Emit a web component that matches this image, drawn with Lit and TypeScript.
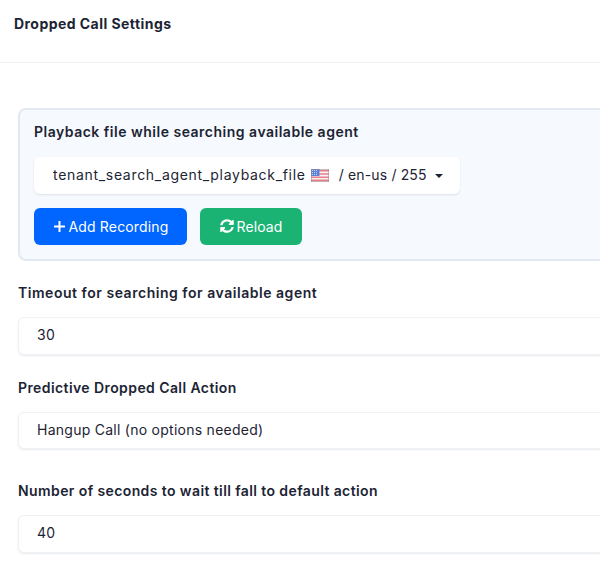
import { LitElement, html, css } from "lit";
import { customElement } from "lit/decorators.js";

@customElement("app-root")
export class AppRoot extends LitElement {
  static styles = css`
    :host {
      display: block;
      width: 600px;
      height: 576px;
      overflow: hidden;
      background: #fff;
      font-family: Inter, "Open Sans", sans-serif;
      color: #1c2434;
      font-size: 14px;
    }
    .head {
      height: 63px;
      box-sizing: border-box;
      padding: 14px 14px 0;
      border-bottom: 1px solid #eef2f6;
      font-weight: 700;
      font-size: 14px;
      line-height: 20px;
      letter-spacing: 0.45px;
      color: #1c2434;
    }
    .body {
      width: 640px;
      box-sizing: border-box;
      padding: 45px 0 0 18px;
      display: flex;
      flex-direction: column;
    }
    .panel {
      box-sizing: border-box;
      width: 620px;
      height: 153px;
      padding: 12px 14px 0;
      background: #f6f9fd;
      border: 2px solid #e2e9f2;
      border-radius: 8px;
    }
    .label {
      font-weight: 600;
      font-size: 14px;
      line-height: 20px;
      letter-spacing: 0.5px;
      color: #1c2434;
    }
    .label.timeout { letter-spacing: 0.53px; }
    .label.action { letter-spacing: 0.41px; }
    .label.seconds { letter-spacing: 0.4px; }
    .select {
      margin-top: 15px;
      display: inline-flex;
      align-items: center;
      height: 37px;
      width: 426px;
      box-sizing: border-box;
      padding: 0 0 3px 19px;
      background: #fff;
      border-radius: 6px;
      box-shadow: 0 1px 2px rgba(40, 60, 90, 0.12);
      white-space: nowrap;
    }
    .file { letter-spacing: 0.69px; }
    .loc { letter-spacing: 0.15px; }
    .flag { margin: 3px 6px 0 5px; flex: none; }
    .caret {
      margin: 3px 0 0 8px;
      width: 0;
      height: 0;
      border-left: 4px solid transparent;
      border-right: 4px solid transparent;
      border-top: 4px solid #1c2434;
    }
    .buttons { display: flex; gap: 13px; margin-top: 14px; }
    .btn {
      display: flex;
      align-items: center;
      justify-content: center;
      gap: 3px;
      height: 37px;
      box-sizing: border-box;
      padding-bottom: 1px;
      border-radius: 6px;
      color: #fff;
      font-size: 14px;
    }
    .add { width: 153px; background: #0066ff; letter-spacing: 0.15px; }
    .reload { width: 102px; background: #1ab374; letter-spacing: 0.1px; }
    .field { display: flex; flex-direction: column; }
    .input {
      box-sizing: border-box;
      width: 620px;
      height: 38px;
      display: flex;
      align-items: center;
      padding: 0 0 3px 18px;
      background: #fff;
      border: 1px solid #eef2f7;
      border-radius: 6px;
      box-shadow: 0 1px 2px rgba(40, 60, 90, 0.1);
      letter-spacing: 0.26px;
    }
    .short { height: 37px; }
    .f1 { margin-top: 22px; }
    .f2 { margin-top: 23px; }
    .f3 { margin-top: 32px; }
    .field .label { margin-bottom: 14px; }
  `;

  render() {
    return html`
      <div class="head">Dropped Call Settings</div>
      <div class="body">
        <div class="panel">
          <div class="label">Playback file while searching available agent</div>
          <div class="select">
            <span class="file">tenant_search_agent_playback_file</span>
            <svg class="flag" width="18" height="13" viewBox="0 0 18 13">
              <rect width="18" height="13" fill="#f7f1f2" />
              <path d="M0 1h18v1.6H0zM0 4.2h18v1.6H0zM0 7.4h18V9H0zM0 10.6h18v1.6H0z" fill="#e8808a" />
              <rect width="8.5" height="7" fill="#5a80d8" />
              <path d="M1 1.500h6M1 3.500h6M1 5.500h6" stroke="#dfe6f7" stroke-width=".8" stroke-dasharray="1 1" />
              <rect x=".25" y=".25" width="17.5" height="12.500" fill="none" stroke="#9a8a88" stroke-width=".5" />
            </svg>
            <span class="loc">&nbsp;/ en-us / 255</span>
            <span class="caret"></span>
          </div>
          <div class="buttons">
            <div class="btn add">
              <svg width="13" height="13" viewBox="0 0 13 13">
                <path d="M6.500 1v11M1 6.500h11" stroke="#fff" stroke-width="2" />
              </svg>
              <span>Add Recording</span>
            </div>
            <div class="btn reload">
              <svg width="14" height="14" viewBox="0 0 512 512" fill="#fff">
                <path d="M370.7 133.3C339.5 104 298.9 88 255.800 88c-77.500.1-144.300 53.200-162.800 126.900-1.300 5.400-6.100 9.100-11.600 9.100H24.100c-7.500 0-13.200-6.800-11.800-14.200C33.900 94.900 134.800 8 256 8c66.400 0 126.800 26.100 171.300 68.700L463 41C478.100 25.900 504 36.600 504 57.900V192c0 13.300-10.700 24-24 24H345.900c-21.400 0-32.100-25.900-17-41l41.800-41.700zM32 296h134.100c21.400 0 32.100 25.900 17 41l-41.800 41.800c31.300 29.300 71.800 45.300 114.900 45.200 77.400-.1 144.300-53.100 162.800-126.800 1.300-5.400 6.100-9.100 11.600-9.100h57.300c7.500 0 13.200 6.800 11.800 14.200C478.100 417.100 377.200 504 256 504c-66.400 0-126.800-26.100-171.300-68.700L49 471C33.900 486.100 8 475.400 8 454.100V320c0-13.300 10.700-24 24-24z" />
              </svg>
              <span>Reload</span>
            </div>
          </div>
        </div>
        <div class="field f1">
          <div class="label timeout">Timeout for searching for available agent</div>
          <div class="input">30</div>
        </div>
        <div class="field f2">
          <div class="label action">Predictive Dropped Call Action</div>
          <div class="input short">Hangup Call (no options needed)</div>
        </div>
        <div class="field f3">
          <div class="label seconds">Number of seconds to wait till fall to default action</div>
          <div class="input">40</div>
        </div>
      </div>
    `;
  }
}
